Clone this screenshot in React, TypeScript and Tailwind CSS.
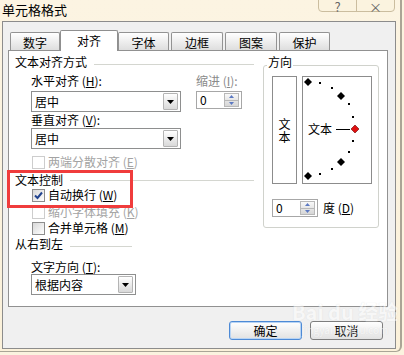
import React from "react";

const Key = ({ k }: { k: string }) => (
  <span>
    {" ("}
    <span className="underline">{k}</span>)
  </span>
);

const DropArrow = () => (
  <div className="mr-[2px] flex h-[17px] w-[15px] items-center justify-center rounded-[1px] border border-[#b4b4b4] bg-gradient-to-b from-white to-[#d9d9d9]">
    <svg width="7" height="4" viewBox="0 0 7 4">
      <path d="M0 0 H7 L3.5 4 Z" fill="#000" />
    </svg>
  </div>
);

const Select = ({ value, width }: { value: string; width: string }) => (
  <div className={`flex h-[21px] items-center border border-[#8e8f8f] bg-white ${width}`}>
    <span className="flex-1 pl-[3px] text-[12px]">{value}</span>
    <DropArrow />
  </div>
);

const Spinner = ({ width }: { width: string }) => (
  <div className={`flex h-[18px] items-center border border-[#a7a7a7] bg-white ${width}`}>
    <span className="flex-1 pl-[3px]">0</span>
    <div className="mr-[2px] flex h-[14px] w-[15px] flex-col border border-[#b8b8b8] bg-gradient-to-b from-[#f8f8f8] to-[#d6d6d6]">
      <div className="flex flex-1 items-center justify-center border-b border-[#b8b8b8]">
        <svg width="5" height="3" viewBox="0 0 5 3">
          <path d="M0 3 L2.5 0 L5 3 Z" fill="#5c79c2" />
        </svg>
      </div>
      <div className="flex flex-1 items-center justify-center">
        <svg width="5" height="3" viewBox="0 0 5 3">
          <path d="M0 0 H5 L2.5 3 Z" fill="#5c79c2" />
        </svg>
      </div>
    </div>
  </div>
);

const Check = ({ checked, disabled }: { checked?: boolean; disabled?: boolean }) =>
  disabled ? (
    <span className="h-[13px] w-[13px] border border-[#cdcdcd] bg-white" />
  ) : (
    <span className="flex h-[13px] w-[13px] items-center justify-center border border-[#8d8d8d] bg-gradient-to-br from-[#d8d8d8] to-white">
      {checked && (
        <svg width="9" height="9" viewBox="0 0 9 9">
          <path d="M1 4.5 L3.5 7 L8 1.5" fill="none" stroke="#22448f" strokeWidth="2" />
        </svg>
      )}
    </span>
  );

const CheckRow = ({
  label,
  k,
  checked,
  disabled,
  className,
}: {
  label: string;
  k: string;
  checked?: boolean;
  disabled?: boolean;
  className: string;
}) => (
  <div className={`flex h-[14px] items-center pl-[17px] ${className}`}>
    <Check checked={checked} disabled={disabled} />
    <span className={`ml-[3px] ${disabled ? "text-[#a3a3a3]" : ""}`}>
      {label}
      <Key k={k} />
    </span>
  </div>
);

const Diamond = ({ x, y, red }: { x: number; y: number; red?: boolean }) => (
  <path
    d={`M${x} ${y - 4} L${x + 4} ${y} L${x} ${y + 4} L${x - 4} ${y} Z`}
    fill={red ? "#e01010" : "#000"}
    stroke={red ? "#600" : "none"}
    strokeWidth={red ? 0.6 : 0}
  />
);

const dots = [
  [17, 6],
  [29, 11],
  [46, 27],
  [50, 40],
  [50, 64],
  [46, 75],
  [29, 92],
  [17, 97],
];

const tabs = ["数字", "对齐", "字体", "边框", "图案", "保护"];

export default function App() {
  return (
    <div className="relative h-[355px] w-[404px] overflow-hidden bg-[#fbf3df] font-['Noto_Sans_CJK_SC',sans-serif] text-[12px] leading-[14px] text-black">
      <div className="h-[352px] w-[402px] rounded-br-[6px] border-r-2 border-b border-[#aaa596] bg-gradient-to-b from-[#fcf4e2] to-[#fbf1da]">
        <div className="h-[21px] pl-[2px] pt-[2px] text-[13px] leading-[16px]">单元格格式</div>

        <div className="ml-[2px] h-[328px] w-[394px] border border-[#8c8c8c] bg-[#f0f0f0]">
          {/* tabs */}
          <div className="mt-[8px] flex h-[20px] items-end pl-[7px]">
            {tabs.map((t, i) =>
              i === 1 ? (
                <div
                  key={t}
                  className="relative z-10 -mb-[1px] h-[21px] w-[58px] rounded-t-[2px] border border-b-0 border-[#8f8f8f] bg-white pt-[2px] text-center text-[12px] leading-[15px]"
                >
                  {t}
                </div>
              ) : (
                <div
                  key={t}
                  className={`h-[18px] rounded-t-[2px] border border-b-0 border-[#939393] bg-gradient-to-b from-white to-[#dedede] pt-[2px] text-center leading-[15px] ${
                    i === 0 ? "w-[50px]" : i === 2 ? "w-[51px]" : i === 5 ? "ml-[2px] w-[51px]" : "ml-[2px] w-[52px]"
                  }`}
                >
                  {t}
                </div>
              )
            )}
          </div>

          {/* panel */}
          <div className="ml-[5px] flex h-[257px] w-[380px] border border-[#919191] bg-white">
            <div className="w-[254px] pl-[6px]">
              <div className="mt-[4px] flex h-[14px]">
                <span>文本对齐方式</span>
                <div className="ml-[7px] mr-[9px] mt-[9px] h-px flex-1 bg-[#d4d6d0]" />
              </div>

              <div className="mt-[5px] flex pl-[16px]">
                <div className="flex w-[150px] flex-col">
                  <span>
                    水平对齐
                    <Key k="H" />:
                  </span>
                  <div className="mt-[3px]">
                    <Select value="居中" width="w-[150px]" />
                  </div>
                  <span className="mt-[1px]">
                    垂直对齐
                    <Key k="V" />:
                  </span>
                  <div className="mt-[1px]">
                    <Select value="居中" width="w-[150px]" />
                  </div>
                </div>
                <div className="ml-[15px] flex flex-col">
                  <span className="text-[#8a8a8a]">
                    缩进
                    <Key k="I" />:
                  </span>
                  <div className="mt-[3px]">
                    <Spinner width="w-[46px]" />
                  </div>
                </div>
              </div>

              <CheckRow label="两端分散对齐" k="E" disabled className="mt-[6px]" />

              <div className="mt-[4px] flex h-[14px]">
                <span>文本控制</span>
                <div className="ml-[7px] mr-[9px] mt-[7px] h-px flex-1 bg-[#d4d6d0]" />
              </div>
              <CheckRow label="自动换行" k="W" checked className="mt-[1px]" />
              <CheckRow label="缩小字体填充" k="K" disabled className="mt-[3px]" />
              <CheckRow label="合并单元格" k="M" className="mt-[2px]" />

              <div className="mt-[2px] flex h-[14px]">
                <span>从右到左</span>
                <div className="ml-[7px] mt-[9px] h-px w-[62px] bg-[#d4d6d0]" />
              </div>
              <div className="mt-[9px] pl-[16px]">
                <span>
                  文字方向
                  <Key k="T" />:
                </span>
                <Select value="根据内容" width="w-[105px]" />
              </div>
            </div>

            {/* orientation group */}
            <div className="relative mt-[14px] h-[163px] w-[116px] rounded-[3px] border border-[#d0d2cc] pl-[8px] pt-[10px]">
              <span className="absolute -top-[11px] left-[3px] bg-white px-[1px]">方向</span>
              <div className="flex">
                <div className="flex h-[108px] w-[25px] flex-col items-center justify-center border border-[#8c8c8c] leading-[13px]">
                  <span>文</span>
                  <span>本</span>
                </div>
                <div className="relative ml-[5px] h-[108px] w-[70px] border border-[#8c8c8c]">
                  <svg width="68" height="106" viewBox="0 0 68 106" className="absolute left-0 top-0">
                    <Diamond x={5} y={5} />
                    <Diamond x={38} y={19} />
                    <Diamond x={38} y={85} />
                    <Diamond x={5} y={99} />
                    {dots.map(([x, y]) => (
                      <rect key={`${x}-${y}`} x={x - 1} y={y - 1} width="2" height="2" fill="#000" />
                    ))}
                    <rect x="33" y="52" width="14" height="1" fill="#000" />
                    <Diamond x={52} y={52} red />
                  </svg>
                  <span className="absolute left-[5px] top-[45px]">文本</span>
                </div>
              </div>
              <div className="mt-[15px] flex items-center">
                <Spinner width="w-[46px]" />
                <span className="ml-[5px]">
                  度<Key k="D" />
                </span>
              </div>
            </div>
          </div>

          {/* buttons */}
          <div className="mt-[14px] flex justify-end gap-[8px] pr-[12px]">
            <button className="h-[19px] w-[73px] rounded-[3px] border border-[#4d8ad6] bg-gradient-to-b from-white to-[#e2e2e2] text-[12px] leading-[14px] shadow-[inset_0_0_0_1px_#b8d4f4]">
              确定
            </button>
            <button className="h-[19px] w-[73px] rounded-[3px] border border-[#7e7e7e] bg-gradient-to-b from-white to-[#e2e2e2] text-[12px] leading-[14px]">
              取消
            </button>
          </div>
        </div>
      </div>

      {/* title bar controls */}
      <div className="absolute -top-[8px] left-[318px] flex h-[20px] w-[77px] rounded-b-[4px] border border-[#cbbd9f] bg-[#fbf3df] text-[13px] leading-[16px] text-[#666]">
        <span className="flex-1 pt-[6px] text-center">?</span>
        <span className="flex-1 border-l border-[#cbbd9f] pt-[6px] text-center">×</span>
      </div>

      {/* annotation */}
      <div className="absolute left-[7px] top-[170px] h-[38px] w-[126px] border-[3px] border-[#f03c3c]" />

      {/* watermark */}
      <div className="pointer-events-none absolute left-[292px] top-[300px] flex flex-col items-center whitespace-nowrap text-white opacity-50">
        <span className="text-[20px] font-bold leading-[24px] [text-shadow:0_0_1px_#c8c8c8]">Bai du 经验</span>
        <span className="text-[10px] leading-[12px] [text-shadow:0_0_1px_#c8c8c8]">jingyan.baidu.com</span>
      </div>
    </div>
  );
}
